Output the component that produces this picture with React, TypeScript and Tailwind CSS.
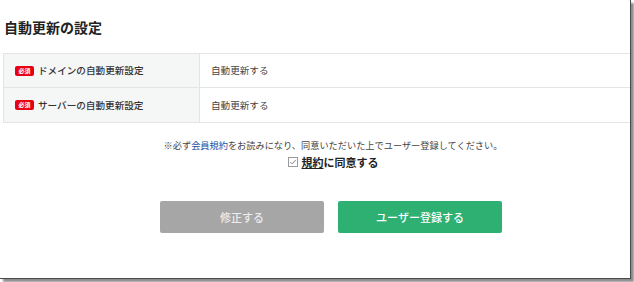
import React from "react";

const font = { fontFamily: '"Noto Sans CJK JP", "Noto Sans", sans-serif' };

function Badge() {
  return (
    <span className="inline-flex items-center justify-center w-[19px] h-[10px] rounded-[2px] bg-[#e60012] text-white text-[6px] leading-none font-bold">
      必須
    </span>
  );
}

function Row({ label, value, last }: { label: string; value: string; last?: boolean }) {
  return (
    <div className={`flex h-[34px] ${last ? "" : "border-b border-[#e4e4e4]"}`}>
      <div className="w-[196px] flex items-center gap-[4px] pl-[11px] bg-[#f5f6f6] border-r border-[#e4e4e4]">
        <Badge />
        <span className="text-[9.6px] text-[#333] font-medium">{label}</span>
      </div>
      <div className="flex-1 flex items-center pl-[11px] text-[9.6px] text-[#444]">{value}</div>
    </div>
  );
}

export default function App() {
  return (
    <div className="w-[634px] h-[282px] bg-white overflow-hidden" style={font}>
      <div className="w-[631px] h-[279px] bg-white border-r border-b border-[#4a4a4a] shadow-[3px_3px_2px_rgba(0,0,0,0.45)] flex flex-col">
        <h2 className="pt-[17px] pl-[4px] text-[14px] leading-[20px] font-bold text-[#222]">自動更新の設定</h2>
        <div className="mt-[16px] ml-[3px] border-t border-b border-l border-[#e4e4e4]">
          <Row label="ドメインの自動更新設定" value="自動更新する" />
          <Row label="サーバーの自動更新設定" value="自動更新する" last />
        </div>
        <div className="pl-[36px] flex flex-col items-center">
          <p className="mt-[16px] text-[9.2px] leading-[13px] text-[#444]">
            ※必ず<span className="text-[#1a4fa5]">会員規約</span>をお読みになり、同意いただいた上でユーザー登録してください。
          </p>
          <label className="mt-[2px] flex items-center gap-[4px] text-[11px] leading-[16px] font-bold text-[#222]">
            <svg width="10" height="10" viewBox="0 0 10 10" className="shrink-0">
              <rect x="0.5" y="0.5" width="9" height="9" fill="white" stroke="#9a9a9a" />
              <path d="M2.3 5.1 L4.2 7 L7.8 2.9" fill="none" stroke="#8a8a8a" strokeWidth="1" />
            </svg>
            <span>
              <span className="underline">規約</span>に同意する
            </span>
          </label>
        </div>
        <div className="mt-[31px] pl-[32px] flex justify-center gap-[14px]">
          <button className="w-[164px] h-[32px] rounded-[2px] bg-[#a6a6a6] text-[#ececec] text-[11px] font-medium">
            修正する
          </button>
          <button className="w-[164px] h-[32px] rounded-[2px] bg-[#2fb073] text-white text-[11px] font-medium">
            ユーザー登録する
          </button>
        </div>
      </div>
    </div>
  );
}
